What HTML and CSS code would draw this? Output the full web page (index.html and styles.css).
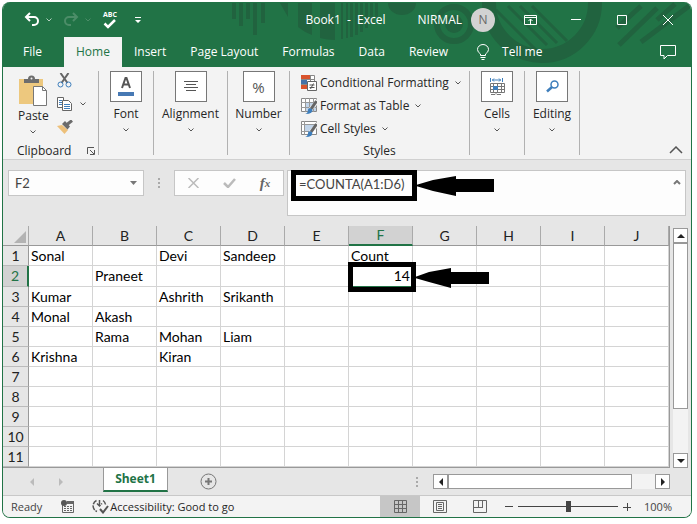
FILE: index.html
```html
<!DOCTYPE html>
<html lang="en">
<head>
<meta charset="utf-8">
<title>Book1 - Excel</title>
<link rel="stylesheet" href="styles.css">
</head>
<body>
<div class="window">
  <header class="top">
    <svg class="art" width="462" height="65" viewBox="0 0 462 65" aria-hidden="true">
      <g fill="#21633f">
        <path d="M3 1h4v16H3zM10 1h4v23h-4zM17 1h4v16h-4zM24 1h4v32h-4zM32 1h4v20h-4z"/>
        <path d="M51 1h8v14zM69 1h14v32q-8-3-14-8zM91 1h15v37q-8 0-15-2zM112 1h2v36h-2zM117 1h2v35h-2zM121 1h3v34h-3zM126 1h3v32h-3zM131 1h3v29h-3zM136 1h3v25h-3zM141 1h3v20h-3zM146 1h3v14h-3z"/>
        <path d="M159 1h28a14 12 0 0 1-28 0z"/>
        <circle cx="225" cy="22" r="9"/>
      </g>
      <g fill="none" stroke="#21633f">
        <circle cx="225" cy="22" r="17" stroke-width="6"/>
        <circle cx="313" cy="1" r="53" stroke-width="14"/>
        <path d="M279 4l39 39M291 4l37 37M303 4l35 35M267 8l40 40" stroke-width="3"/>
        <path d="M428 6l-38 37M460 4l-48 36M412 4l-24 22M446 2l-18 16" stroke-width="5"/>
      </g>
    </svg>
    <div class="titlebar">
      <button class="qat undo" aria-label="Undo"><svg width="16" height="16" viewBox="0 0 16 16"><path d="M6 1L2 5l4 4M2.500 5H10a4 4 0 0 1 0 8H8" fill="none" stroke="#fff" stroke-width="2"/></svg></button>
      <button class="qat" aria-label="Undo list"><svg width="6" height="4" viewBox="0 0 6 4"><path d="M.500.500L3 3 5.500.500" fill="none" stroke="#b5d0c0"/></svg></button>
      <button class="qat redo" aria-label="Redo"><svg width="16" height="16" viewBox="0 0 16 16"><path d="M10 1l4 4-4 4M13.500 5H6a4 4 0 0 0 0 8h2" fill="none" stroke="#4c8d68" stroke-width="2"/></svg></button>
      <button class="qat" aria-label="Redo list"><svg width="6" height="4" viewBox="0 0 6 4"><path d="M.500.500L3 3 5.500.500" fill="none" stroke="#4c8d68"/></svg></button>
      <button class="qat spelling" aria-label="Spelling"><span>ABC</span><svg width="14" height="10" viewBox="0 0 14 10"><path d="M1.500 4.500L5 8l7-7" fill="none" stroke="#fff" stroke-width="2.500"/></svg></button>
      <button class="qat" aria-label="Customize toolbar"><svg width="6" height="6" viewBox="0 0 6 6"><path d="M0 0h6v1H0zM0 3h6L3 6z" fill="#fff"/></svg></button>
      <h1 class="title">Book1&nbsp; -&nbsp; Excel</h1>
      <span class="user">NIRMAL</span>
      <span class="avatar">N</span>
      <div class="wincontrols">
        <button aria-label="Ribbon display options"><svg width="13" height="10" viewBox="0 0 13 10"><path d="M.500.500h12v9H.500zM.500 2.500h12M6.500 9V4M4.500 6l2-2 2 2" fill="none" stroke="#fff"/></svg></button>
        <button aria-label="Minimize"><svg width="10" height="10" viewBox="0 0 10 10"><path d="M0 4.500h10" stroke="#fff"/></svg></button>
        <button aria-label="Maximize"><svg width="10" height="10" viewBox="0 0 10 10"><path d="M.500.500h9v9h-9z" fill="none" stroke="#fff"/></svg></button>
        <button aria-label="Close"><svg width="10" height="10" viewBox="0 0 10 10"><path d="M0 0l10 10M10 0L0 10" stroke="#fff"/></svg></button>
      </div>
    </div>
    <nav class="tabs">
      <a class="file" href="#file">File</a>
      <a class="current" href="#home">Home</a>
      <a href="#insert">Insert</a>
      <a href="#layout">Page Layout</a>
      <a href="#formulas">Formulas</a>
      <a href="#data">Data</a>
      <a href="#review">Review</a>
      <a class="tellme" href="#tell"><svg width="12" height="16" viewBox="0 0 12 16"><path d="M3.500 11.500V10Q.500 8 .500 5.500a5.500 5 0 0 1 11 0Q11.500 8 8.500 10v1.500zM3.500 13.500h5M4.500 15.500h3" fill="none" stroke="#fff"/></svg>Tell me</a>
      <button class="comments" aria-label="Comments"><svg width="17" height="15" viewBox="0 0 17 15"><path d="M.500.500h15v10H7.500l-3.500 3.500v-3.500H.500z" fill="none" stroke="#fff"/></svg></button>
    </nav>
  </header>

  <section class="ribbon">
    <div class="group clipboard">
      <div class="clip-tools">
        <button class="paste">
          <svg width="29" height="31" viewBox="0 0 29 31"><path d="M0 4h24v25H0z" fill="#edc87e"/><path d="M5 8V4h4a3.500 3.500 0 0 1 7 0h4v4z" fill="#6d6d6d"/><circle cx="12.500" cy="3.500" r="1" fill="#f3f3f3"/><path d="M14.500 11.500h9l4 4v15h-13z" fill="#fff" stroke="#777"/><path d="M23.500 11.500v4h4" fill="none" stroke="#777"/></svg>
          <span>Paste</span>
          <svg class="chev" width="6" height="4" viewBox="0 0 6 4"><path d="M.500.500L3 3 5.500.500"/></svg>
        </button>
        <div class="clip-small">
          <button aria-label="Cut"><svg width="15" height="15" viewBox="0 0 15 15"><path d="M3.500 0l7 10M11.500 0l-7 10" stroke="#666" stroke-width="2"/><circle cx="3.500" cy="11.500" r="2.500" fill="none" stroke="#3e7ebb"/><circle cx="11.500" cy="11.500" r="2.500" fill="none" stroke="#3e7ebb"/></svg></button>
          <button aria-label="Copy"><svg width="15" height="14" viewBox="0 0 15 14"><path d="M.500.500h6v10h-6z" fill="#fff" stroke="#666"/><path d="M2 3.500h3M2 5.500h3M2 7.500h3" stroke="#3e7ebb"/><path d="M5.500 3.500h6l3 3v7h-9z" fill="#fff" stroke="#666"/><path d="M7 7.500h6M7 9.500h6M7 11.500h6" stroke="#3e7ebb"/></svg><svg class="chev" width="6" height="4" viewBox="0 0 6 4"><path d="M.500.500L3 3 5.500.500"/></svg></button>
          <button aria-label="Format painter"><svg width="16" height="14" viewBox="0 0 16 14"><path d="M0 6l5-1 6 5-3.500 4z" fill="#edc07a"/><path d="M5 4l3-3 5 5.500-2.500 3z" fill="#6b6b6b"/><path d="M10 4.500L15 .500" stroke="#6b6b6b" stroke-width="3"/></svg></button>
        </div>
      </div>
      <div class="caption">Clipboard<button class="launcher" aria-label="Clipboard settings"><svg width="8" height="8" viewBox="0 0 8 8"><path d="M.500 7V.500H7M3 3l4 4M7.500 3v4.500H3" fill="none" stroke="#555"/></svg></button></div>
    </div>
    <button class="group big font">
      <span class="tile"><svg width="16" height="24" viewBox="0 0 16 24"><path d="M4 13L7.500 3h1L12 13M5 9.500h6" fill="none" stroke="#555" stroke-width="2"/><path d="M0 17h16v4H0z" fill="#4779b4"/></svg></span>
      <span>Font</span><svg class="chev" width="6" height="4" viewBox="0 0 6 4"><path d="M.500.500L3 3 5.500.500"/></svg>
    </button>
    <button class="group big alignment">
      <span class="tile"><svg width="14" height="11" viewBox="0 0 14 11"><path d="M0 .500h14M2 3.500h10M0 6.500h14M2 9.500h10" stroke="#555"/></svg></span>
      <span>Alignment</span><svg class="chev" width="6" height="4" viewBox="0 0 6 4"><path d="M.500.500L3 3 5.500.500"/></svg>
    </button>
    <button class="group big number">
      <span class="tile percent">%</span>
      <span>Number</span><svg class="chev" width="6" height="4" viewBox="0 0 6 4"><path d="M.500.500L3 3 5.500.500"/></svg>
    </button>
    <div class="group styles">
      <div class="style-list">
        <button><svg width="16" height="16" viewBox="0 0 16 16"><path d="M.500.500h13v13H.500z" fill="#fff" stroke="#888"/><path d="M4.500 0v14M9.500 0v14M0 4.500h14M0 9.500h14" stroke="#888"/><path d="M0 0h9v4H0zM0 10h6v4H0z" fill="#d9532c"/><path d="M0 5h6v4H0z" fill="#4472a8"/><path d="M6.500 6.500h9v9h-9z" fill="#fff" stroke="#666"/><path d="M8.500 10h5M8.500 12.500h5M12.500 8.500l-3 5.500" stroke="#555"/></svg><span>Conditional Formatting</span><svg class="chev" width="6" height="4" viewBox="0 0 6 4"><path d="M.500.500L3 3 5.500.500"/></svg></button>
        <button><svg width="16" height="16" viewBox="0 0 16 16"><path d="M.500.500h15v13H.500z" fill="#fff" stroke="#888"/><path d="M5 5h10v8H5z" fill="#c2d5ea"/><path d="M4.500 0v14M8.500 0v14M12.500 0v14M0 4.500h16M0 9.500h16" stroke="#999"/><path d="M16 1v6l-5 5-3-2z" fill="#f3f3f3"/><path d="M15.500 3L10 11" stroke="#666" stroke-width="3"/><path d="M4 16q3-1 3-4t4-1q2 5-7 5z" fill="#3e7ebb"/></svg><span>Format as Table</span><svg class="chev" width="6" height="4" viewBox="0 0 6 4"><path d="M.500.500L3 3 5.500.500"/></svg></button>
        <button><svg width="16" height="16" viewBox="0 0 16 16"><path d="M.500.500h15v13H.500z" fill="#fff" stroke="#888"/><path d="M4 4h9v6H4z" fill="#c2d5ea"/><path d="M3.500 0v14M0 3.500h16M0 10.500h8" stroke="#999"/><path d="M16 1v6l-5 5-3-2z" fill="#f3f3f3"/><path d="M15.500 3L10 11" stroke="#666" stroke-width="3"/><path d="M4 16q3-1 3-4t4-1q2 5-7 5z" fill="#3e7ebb"/></svg><span>Cell Styles</span><svg class="chev" width="6" height="4" viewBox="0 0 6 4"><path d="M.500.500L3 3 5.500.500"/></svg></button>
      </div>
      <div class="caption">Styles</div>
    </div>
    <button class="group big cells">
      <span class="tile"><svg width="15" height="17" viewBox="0 0 15 17"><path d="M.500 0v4M12.500 0v4M2 2h9M4 .500L2.500 2 4 3.500M9 .500L10.500 2 9 3.500" fill="none" stroke="#3e7ebb"/><path d="M.500 5.500h14v9H.500zM.500 8.500h14M.500 11.500h14M3.500 5v10M7.500 5v10M11.500 5v10M1 16.500h4l1-1 1 1h4" fill="none" stroke="#777"/><path d="M3 8h5v4H3z" fill="#3e7ebb"/></svg></span>
      <span>Cells</span><svg class="chev" width="6" height="4" viewBox="0 0 6 4"><path d="M.500.500L3 3 5.500.500"/></svg>
    </button>
    <button class="group big editing">
      <span class="tile"><svg width="13" height="13" viewBox="0 0 13 13"><circle cx="8.500" cy="4.500" r="3.500" fill="none" stroke="#3e7ebb" stroke-width="1.500"/><path d="M6 7l-5 4.500" stroke="#3e7ebb" stroke-width="2.500"/></svg></span>
      <span>Editing</span><svg class="chev" width="6" height="4" viewBox="0 0 6 4"><path d="M.500.500L3 3 5.500.500"/></svg>
    </button>
    <button class="collapse" aria-label="Collapse ribbon"><svg width="14" height="8" viewBox="0 0 14 8"><path d="M1 7l6-6 6 6" fill="none" stroke="#555" stroke-width="1.500"/></svg></button>
  </section>

  <section class="formulabar">
    <div class="namebox">
      <input type="text" value="F2" aria-label="Name box">
      <svg width="7" height="4" viewBox="0 0 7 4"><path d="M0 0h7L3.500 4z" fill="#777"/></svg>
    </div>
    <span class="dots"></span>
    <div class="entry">
      <button aria-label="Cancel"><svg width="11" height="10" viewBox="0 0 11 10"><path d="M.500 0l10 10M10.500 0l-10 10" stroke="#bbb" stroke-width="1.500"/></svg></button>
      <button aria-label="Enter"><svg width="13" height="10" viewBox="0 0 13 10"><path d="M1 5l4 4 7-8" fill="none" stroke="#bbb" stroke-width="2.500"/></svg></button>
      <button class="fx" aria-label="Insert function">f<sub>x</sub></button>
    </div>
    <div class="formula">
      <textarea aria-label="Formula" rows="1" spellcheck="false">=COUNTA(A1:D6)</textarea>
      <svg class="expand" width="8" height="5" viewBox="0 0 8 5"><path d="M1 4l3-3 3 3" fill="none" stroke="#777" stroke-width="2"/></svg>
      <div class="callout"><svg width="78" height="20" viewBox="0 0 78 20"><path d="M0 9L17 4 40 0v3h38v13H40v4L17 15 0 10z"/></svg></div>
    </div>
  </section>

  <main class="sheet">
    <div class="gridwrap">
      <table>
        <thead>
          <tr><th class="corner"><svg width="12" height="12" viewBox="0 0 12 12"><path d="M12 0v12H0z" fill="#b3b3b3"/></svg></th><th>A</th><th>B</th><th>C</th><th>D</th><th>E</th><th class="active">F</th><th>G</th><th>H</th><th>I</th><th>J</th></tr>
        </thead>
        <tbody>
          <tr><th>1</th><td>Sonal</td><td></td><td>Devi</td><td>Sandeep</td><td></td><td>Count</td><td></td><td></td><td></td><td></td></tr>
          <tr class="tall"><th class="active">2</th><td></td><td>Praneet</td><td></td><td></td><td></td><td class="selected">14<div class="callout"><svg width="74" height="20" viewBox="0 0 74 20"><path d="M0 9L14 4 36 0v4h38v12H36v4L14 14 0 10z"/></svg></div></td><td></td><td></td><td></td><td></td></tr>
          <tr><th>3</th><td>Kumar</td><td></td><td>Ashrith</td><td>Srikanth</td><td></td><td></td><td></td><td></td><td></td><td></td></tr>
          <tr><th>4</th><td>Monal</td><td>Akash</td><td></td><td></td><td></td><td></td><td></td><td></td><td></td><td></td></tr>
          <tr><th>5</th><td></td><td>Rama</td><td>Mohan</td><td>Liam</td><td></td><td></td><td></td><td></td><td></td><td></td></tr>
          <tr><th>6</th><td>Krishna</td><td></td><td>Kiran</td><td></td><td></td><td></td><td></td><td></td><td></td><td></td></tr>
          <tr><th>7</th><td></td><td></td><td></td><td></td><td></td><td></td><td></td><td></td><td></td><td></td></tr>
          <tr><th>8</th><td></td><td></td><td></td><td></td><td></td><td></td><td></td><td></td><td></td><td></td></tr>
          <tr><th>9</th><td></td><td></td><td></td><td></td><td></td><td></td><td></td><td></td><td></td><td></td></tr>
          <tr><th>10</th><td></td><td></td><td></td><td></td><td></td><td></td><td></td><td></td><td></td><td></td></tr>
          <tr><th>11</th><td></td><td></td><td></td><td></td><td></td><td></td><td></td><td></td><td></td><td></td></tr>
        </tbody>
      </table>
    </div>
    <div class="vscroll">
      <button aria-label="Scroll up"><svg width="8" height="4" viewBox="0 0 8 4"><path d="M0 4h8L4 0z" fill="#222"/></svg></button>
      <span class="vtrack"><span class="vthumb"></span></span>
      <button aria-label="Scroll down"><svg width="8" height="4" viewBox="0 0 8 4"><path d="M0 0h8L4 4z" fill="#222"/></svg></button>
    </div>
  </main>

  <section class="sheetbar">
    <button class="nav" aria-label="Previous sheet"><svg width="4" height="8" viewBox="0 0 4 8"><path d="M4 0v8L0 4z" fill="#bbb"/></svg></button>
    <button class="nav" aria-label="Next sheet"><svg width="4" height="8" viewBox="0 0 4 8"><path d="M0 0v8l4-4z" fill="#bbb"/></svg></button>
    <button class="sheettab">Sheet1</button>
    <button class="add" aria-label="New sheet"><svg width="17" height="17" viewBox="0 0 17 17"><circle cx="8.500" cy="8.500" r="7.500" fill="none" stroke="#777"/><path d="M8.500 5v7M5 8.500h7" stroke="#777" stroke-width="2"/></svg></button>
    <span class="dots"></span>
    <div class="hscroll">
      <button aria-label="Scroll left"><svg width="4" height="8" viewBox="0 0 4 8"><path d="M4 0v8L0 4z" fill="#222"/></svg></button>
      <span class="hthumb"></span>
      <button aria-label="Scroll right"><svg width="4" height="8" viewBox="0 0 4 8"><path d="M0 0v8l4-4z" fill="#222"/></svg></button>
    </div>
  </section>

  <footer class="status">
    <span class="ready">Ready</span>
    <svg class="macro" width="13" height="13" viewBox="0 0 13 13"><path d="M1.500 4v8.500h11v-11H6" fill="none" stroke="#666"/><path d="M6 1h7v3H6z" fill="#666"/><circle cx="3" cy="3" r="3" fill="#555"/><path d="M3 6.500h2M6 6.500h2M9 6.500h2M3 8.500h2M6 8.500h2M9 8.500h2M3 10.500h2M6 10.500h2M9 10.500h2" stroke="#666"/></svg>
    <button class="access"><svg width="17" height="15" viewBox="0 0 17 15"><path d="M4.500 1.500A6 6 0 0 0 5 12.500M11 1.500a6 6 0 0 1 2.500 4M7.500 1v6M5 4.500l2.500 2.500L10 4.500" fill="none" stroke="#555" stroke-width="1.500" stroke-dasharray="5 1"/><path d="M8 10l3 3.500L16 7" fill="none" stroke="#555" stroke-width="2"/></svg>Accessibility: Good to go</button>
    <div class="views">
      <button class="on" aria-label="Normal view"><svg width="13" height="13" viewBox="0 0 13 13"><path d="M.500.500h12v12H.500zM4.500 0v13M8.500 0v13M0 4.500h13M0 8.500h13" fill="none" stroke="#666"/></svg></button>
      <button aria-label="Page layout view"><svg width="14" height="13" viewBox="0 0 14 13"><path d="M.500.500h13v12H.500zM3.500 2.500h7v8h-7zM5 4.500h4M5 6.500h4M5 8.500h4" fill="none" stroke="#666"/></svg></button>
      <button aria-label="Page break view"><svg width="14" height="13" viewBox="0 0 14 13"><path d="M.500.500h13v12H.500zM5.500 0v8M9.500 0v7.500M0 7.500h10" fill="none" stroke="#666"/></svg></button>
    </div>
    <button class="zoombtn" aria-label="Zoom out"><svg width="8" height="8" viewBox="0 0 8 8"><path d="M0 3.500h8" stroke="#444"/></svg></button>
    <input class="zoom" type="range" min="0" max="100" value="50" aria-label="Zoom">
    <button class="zoombtn" aria-label="Zoom in"><svg width="8" height="8" viewBox="0 0 8 8"><path d="M0 4.500h8M4.500 0v8" stroke="#444"/></svg></button>
    <span class="pct">100%</span>
  </footer>
</div>
</body>
</html>
```
FILE: styles.css
```css
* { box-sizing: border-box; }
body {
  margin: 0;
  padding: 2px 5px 6px 2px;
  background: #fff;
  font: 12px/16px "Open Sans", "Noto Sans", sans-serif;
  color: #262626;
}
button {
  border: 0;
  padding: 0;
  background: none;
  font: inherit;
  color: inherit;
  display: flex;
  align-items: center;
  justify-content: center;
}
svg { display: block; flex: none; }
a { color: inherit; text-decoration: none; }
.chev { fill: none; stroke: #555; }

.window {
  border: 1px solid #217346;
  border-top: 0;
  border-radius: 8px;
  overflow: hidden;
  background: #e6e6e6;
}

.top { position: relative; background: #217346; color: #fff; }
.art { position: absolute; right: 0; top: 0; }
.titlebar, .tabs { position: relative; display: flex; align-items: center; }
.titlebar { height: 35px; padding-left: 21px; }
.qat { margin-right: 6px; height: 16px; }
.redo { margin-left: 5px; }
.spelling { flex-direction: column; margin: 0 18px 0 6px; font: bold 7px/8px "Open Sans", sans-serif; }
.title { margin: 0 32px 0 auto; font-size: 12px; font-weight: 400; }
.user { margin-right: 9px; }
.avatar {
  width: 24px;
  line-height: 24px;
  border-radius: 50%;
  background: #d2d2d2;
  color: #666;
  text-align: center;
  margin-right: 12px;
}
.wincontrols { display: flex; }
.wincontrols button { width: 46px; height: 32px; }

.tabs { height: 30px; }
.tabs a { padding: 0 12px; line-height: 30px; }
.tabs .file { padding: 0 22px 0 20px; }
.tabs .current { background: #f3f3f3; color: #217346; }
.tabs .tellme { display: flex; align-items: center; gap: 13px; margin-left: 5px; }
.comments { margin: 0 14px 0 auto; }

.ribbon {
  display: flex;
  height: 93px;
  padding: 4px 0;
  background: #f3f3f3;
  border-bottom: 1px solid #d0d0d0;
}
.group { border-right: 1px solid #b1b1b1; flex: none; }
.big {
  flex-direction: column;
  justify-content: flex-start;
}
.tile {
  width: 32px;
  height: 31px;
  margin-bottom: 4px;
  border: 1px solid #777;
  background: #fff;
  display: flex;
  align-items: center;
  justify-content: center;
}
.percent { font-size: 15px; color: #555; }
.big .chev { margin-top: 6px; }
.clipboard { width: 96px; }
.font, .cells, .editing { width: 55px; }
.alignment { width: 74px; }
.number { width: 62px; }
.styles { width: 180px; }
.clipboard, .styles { display: flex; flex-direction: column; justify-content: space-between; }
.clip-tools { display: flex; padding-left: 15px; gap: 8px; }
.paste { flex-direction: column; padding-top: 4px; }
.paste span { margin-top: 2px; }
.paste .chev { margin-top: 6px; }
.clip-small { display: flex; flex-direction: column; align-items: flex-start; gap: 8px; padding-top: 2px; }
.clip-small button { gap: 8px; height: 15px; }
.caption { display: flex; align-items: center; justify-content: center; height: 8px; }
.clipboard .caption { padding: 0 3px 0 14px; justify-content: space-between; }
.style-list { padding: 0 0 0 11px; }
.style-list button { height: 23px; gap: 3px; }
.style-list .chev { margin-left: 3px; }
.collapse { margin: auto 8px 1px auto; }

.formulabar {
  display: flex;
  align-items: flex-start;
  height: 66px;
  padding: 10px 5px;
}
.namebox, .entry, .formula { background: #fdfdfd; border: 1px solid #c6c6c6; }
.namebox, .entry { display: flex; align-items: center; height: 26px; }
.namebox { width: 136px; padding-right: 6px; }
.namebox input {
  flex: 1;
  min-width: 0;
  border: 0;
  padding: 0 0 0 6px;
  background: none;
  font: 13px/20px Lato, sans-serif;
  color: #444;
}
.dots {
  width: 2px;
  height: 10px;
  background: repeating-linear-gradient(#aaa 0 2px, transparent 2px 4px);
}
.formulabar .dots { margin: 8px 14px 0; }
.entry { width: 110px; }
.entry button { flex: 1; height: 24px; }
.fx { font: italic bold 15px/20px "Liberation Serif", serif; color: #666; }
.fx sub { font-size: 11px; line-height: 8px; }
.formula { position: relative; flex: 1; height: 46px; margin-left: 3px; }
.formula textarea {
  display: block;
  width: 90%;
  height: 28px;
  border: 0;
  padding: 4px 0 0 11px;
  resize: none;
  overflow: hidden;
  background: none;
  font: 13px/18px Lato, sans-serif;
  color: #444;
}
.expand { position: absolute; right: 4px; top: 9px; }
.callout { position: absolute; border: 5px solid #000; }
.callout svg { position: absolute; left: 100%; margin-left: 4px; top: 1px; }
.formula .callout { left: 3px; top: -1px; width: 126px; height: 31px; }

.sheet { display: flex; }
.gridwrap { flex: 1; border-right: 1px solid #999; border-bottom: 1px solid #999; }
table {
  width: 100%;
  table-layout: fixed;
  border-collapse: separate;
  border-spacing: 0;
  font: 14px/18px Lato, sans-serif;
  color: #000;
}
th, td { height: 20px; padding: 0 2px; white-space: nowrap; line-height: 18px; }
th { font-weight: 400; background: #e6e6e6; text-align: center; color: #222; padding: 0; }
th:first-child { width: 26px; border-right: 1px solid #999; border-bottom: 1px solid #bbb; }
thead th, thead th:first-child { border-right: 1px solid #aaa; border-bottom: 1px solid #999; }
td { position: relative; background: #fff; border-right: 1px solid #d4d4d4; border-bottom: 1px solid #d4d4d4; }
.tall th, .tall td { height: 21px; }
.corner svg { margin: 2px 2px 0 auto; }
thead .active { background: #d2d2d2; color: #217346; border-bottom: 2px solid #217346; }
tbody th.active { background: #d2d2d2; color: #217346; border-right: 2px solid #217346; }
.selected { text-align: right; border-bottom-color: #217346; }
.selected .callout { left: -1px; top: -4px; right: -4px; height: 30px; z-index: 1; }

.vscroll { display: flex; flex-direction: column; width: 21px; padding: 2px 3px 0; }
.vscroll button, .vthumb, .hscroll button, .hthumb { border: 1px solid #999; background: #fff; }
.vscroll button { height: 15px; width: 15px; }
.vtrack { flex: 1; display: flex; background: #f3f3f3; padding-bottom: 44px; }
.vthumb { width: 15px; }

.sheetbar {
  display: flex;
  height: 28px;
  padding: 0 21px 0 27px;
  border-bottom: 1px solid #c8c8c8;
  align-items: center;
}
.nav { width: 4px; height: 8px; margin-right: 25px; }
.sheettab {
  align-self: flex-start;
  width: 65px;
  height: 24px;
  margin-left: 15px;
  border: 1px solid #999;
  border-top: 0;
  border-bottom: 2px solid #217346;
  background: #fff;
  color: #217346;
  font-weight: 700;
}
.add { margin-left: 32px; }
.sheetbar .dots { margin: 0 15px 0 auto; }
.hscroll { display: flex; width: 237px; background: #f3f3f3; }
.hscroll button { width: 15px; height: 15px; }
.hthumb { flex: 1; margin-right: 23px; height: 15px; }

.status {
  display: flex;
  align-items: center;
  height: 21px;
  padding: 0 19px 0 8px;
  background: #f3f3f3;
  font-size: 11px;
  color: #444;
}
.macro { margin: 0 18px 0 19px; }
.access { gap: 1px; color: #262626; }
.views { display: flex; margin-left: auto; align-self: stretch; }
.views button { width: 40px; }
.views .on { background: #c6c6c6; }
.zoombtn { width: 8px; height: 16px; margin: 0 5px; }
.zoom { appearance: none; width: 100px; height: 12px; margin: 0; background: linear-gradient(#444, #444) center / 100% 1px no-repeat; }
.zoom::-webkit-slider-thumb { appearance: none; width: 5px; height: 11px; background: #444; }
.pct { margin-left: 8px; }
```
